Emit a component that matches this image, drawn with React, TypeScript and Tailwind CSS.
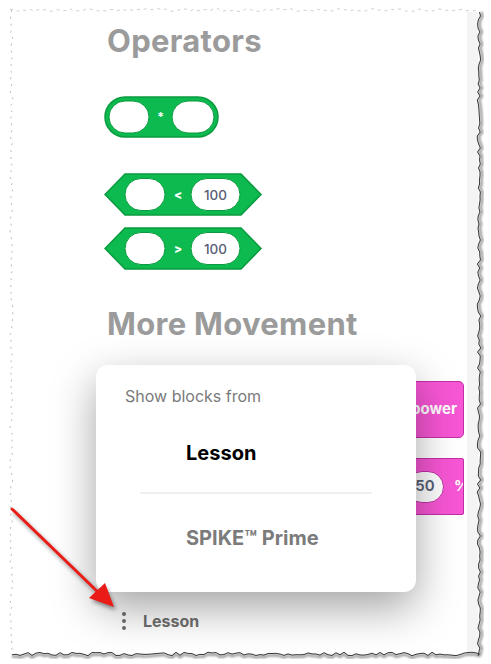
import React from "react";

function rand(seed: number) {
  let s = seed;
  return () => {
    s = (s * 9301 + 49297) % 233280;
    return s / 233280;
  };
}

function jag(
  from: number,
  to: number,
  base: number,
  amp: number,
  step: number,
  horizontal: boolean,
  seed: number
) {
  const r = rand(seed);
  const pts: string[] = [];
  for (let p = from; p <= to; p += step) {
    const off = base + (r() - 0.5) * amp * 2;
    pts.push(horizontal ? `${p},${off.toFixed(1)}` : `${off.toFixed(1)},${p}`);
  }
  return pts.join(" ");
}

function TornFrame() {
  return (
    <svg
      className="absolute inset-0 pointer-events-none"
      width={491}
      height={664}
      viewBox="0 0 491 664"
    >
      <defs>
        <filter id="sh" x="-10%" y="-10%" width="120%" height="120%">
          <feGaussianBlur stdDeviation="1.2" />
        </filter>
      </defs>
      <polyline
        points={jag(10, 478, 10, 1.5, 4, true, 3)}
        fill="none"
        stroke="#cfcfcf"
        strokeWidth={1}
        strokeDasharray="3 4"
      />
      <polyline
        points={jag(10, 654, 11.5, 1.5, 4, false, 7)}
        fill="none"
        stroke="#bdbdbd"
        strokeWidth={1}
        strokeDasharray="2 5"
      />
      <polyline
        points={jag(12, 656, 481, 1.8, 4, false, 11)}
        fill="none"
        stroke="#9a9a9a"
        strokeWidth={2.5}
        filter="url(#sh)"
      />
      <polyline
        points={jag(12, 481, 656, 1.8, 4, true, 13)}
        fill="none"
        stroke="#9a9a9a"
        strokeWidth={2.5}
        filter="url(#sh)"
      />
      <polyline
        points={jag(12, 656, 479, 1.8, 4, false, 11)}
        fill="none"
        stroke="#3a3a3a"
        strokeWidth={1}
      />
      <polyline
        points={jag(12, 481, 654, 1.8, 4, true, 13)}
        fill="none"
        stroke="#3a3a3a"
        strokeWidth={1}
      />
    </svg>
  );
}

function ReporterBlock() {
  return (
    <svg width={116} height={42} viewBox="0 0 116 42">
      <rect x={1} y={1} width={113} height={40} rx={20} fill="#0dba4f" stroke="#0b9a3f" strokeWidth={1.5} />
      <rect x={5} y={5} width={40} height={32} rx={16} fill="#fff" stroke="#0b9a3f" strokeWidth={1} />
      <rect x={68} y={5} width={42} height={32} rx={16} fill="#fff" stroke="#0b9a3f" strokeWidth={1} />
      <text x={56.5} y={25} textAnchor="middle" fill="#fff" fontSize={12} fontWeight={700} fontFamily="Inter, sans-serif">
        *
      </text>
    </svg>
  );
}

function BoolBlock({ op }: { op: string }) {
  return (
    <svg width={160} height={43} viewBox="0 0 160 43">
      <polygon
        points="1,21.5 21,1 137,1 157,21.5 137,42 21,42"
        fill="#0dba4f"
        stroke="#0b9a3f"
        strokeWidth={1.5}
      />
      <rect x={21} y={5.5} width={40} height={32} rx={16} fill="#fff" stroke="#0b9a3f" strokeWidth={1} />
      <text x={74} y={26} textAnchor="middle" fill="#fff" fontSize={12} fontWeight={800} fontFamily="Inter, sans-serif">
        {op}
      </text>
      <rect x={87} y={5.5} width={49} height={32} rx={16} fill="#fff" stroke="#0b9a3f" strokeWidth={1} />
      <text x={111.5} y={26.5} textAnchor="middle" fill="#575e75" fontSize={13.5} fontWeight={500} fontFamily="Inter, sans-serif">
        100
      </text>
    </svg>
  );
}

function RedArrow() {
  return (
    <svg className="absolute left-0 top-0 pointer-events-none" width={491} height={664} viewBox="0 0 491 664">
      <defs>
        <filter id="ash" x="-20%" y="-20%" width="140%" height="140%">
          <feGaussianBlur stdDeviation="2" />
        </filter>
      </defs>
      <g filter="url(#ash)" opacity={0.45} transform="translate(2,3)">
        <line x1={12} y1={509} x2={100} y2={594} stroke="#000" strokeWidth={3} />
        <polygon points="114,607 90,598 104,584" fill="#000" />
      </g>
      <line x1={12} y1={509} x2={100} y2={594} stroke="#ea1c17" strokeWidth={3} strokeLinecap="round" />
      <polygon points="114,607 89,598 105,583" fill="#ea1c17" />
    </svg>
  );
}

export default function App() {
  const font = { fontFamily: "Inter, 'Noto Sans', sans-serif" };
  return (
    <div className="relative w-[491px] h-[664px] bg-white overflow-hidden" style={font}>
      <div className="absolute left-[467px] top-[12px] w-[11px] h-[642px] bg-[#f4f4f4]" />

      <div className="flex flex-col pl-[104px] pt-[22px]">
        <h2 className="text-[31px] leading-[38px] font-bold text-[#9b9b9b] pl-[3px] tracking-[0.3px]">Operators</h2>
        <div className="mt-[36px]">
          <ReporterBlock />
        </div>
        <div className="mt-[35px]">
          <BoolBlock op="<" />
        </div>
        <div className="mt-[11px]">
          <BoolBlock op=">" />
        </div>
        <h2 className="mt-[35px] text-[31px] leading-[38px] font-bold text-[#9b9b9b] pl-[3px] tracking-[0.3px]">More Movement</h2>

        <div className="mt-[38px] flex flex-col items-end pr-[27px] gap-[20px]">
          <div className="w-[160px] h-[57px] rounded-[5px] bg-[#f756d4] border border-[#c22fa6] flex items-center justify-end pr-[6px]">
            <span className="text-white font-bold text-[15px]">set power</span>
          </div>
          <div className="w-[160px] h-[57px] rounded-[2px] bg-[#f756d4] border border-[#c22fa6] flex items-center justify-start pl-[101px] gap-[10px] overflow-hidden">
            <div className="shrink-0 w-[38px] h-[32px] rounded-full bg-white border border-[#c22fa6] flex items-center justify-center text-[#575e75] font-semibold text-[15px]">
              50
            </div>
            <span className="shrink-0 text-white font-bold text-[15px]">%</span>
          </div>
        </div>
      </div>

      <div className="absolute left-[118px] top-[609px] flex items-center gap-[13px]">
        <svg width={12} height={22} viewBox="0 0 12 22">
          <circle cx={6} cy={4} r={2} fill="#6f6f6f" />
          <circle cx={6} cy={11} r={2} fill="#6f6f6f" />
          <circle cx={6} cy={18} r={2} fill="#6f6f6f" />
        </svg>
        <span className="text-[16px] font-bold text-[#6f6f6f]">Lesson</span>
      </div>

      <div className="absolute left-[96px] top-[365px] w-[320px] h-[227px] rounded-[12px] bg-white shadow-[0_16px_44px_rgba(0,0,0,0.36)] flex flex-col">
        <div className="pl-[29px] pt-[20px] text-[16px] text-[#7a7a7a] leading-[22px]">Show blocks from</div>
        <div className="pl-[90px] pt-[33px] text-[20px] font-bold text-black leading-[26px]">Lesson</div>
        <div className="mx-[44px] mt-[26px] h-[2px] bg-[#f0f0f0]" />
        <div className="pl-[90px] pt-[31px] text-[20px] font-bold text-[#7b7b7b] leading-[26px]">SPIKE™ Prime</div>
      </div>

      <RedArrow />
      <TornFrame />
    </div>
  );
}
